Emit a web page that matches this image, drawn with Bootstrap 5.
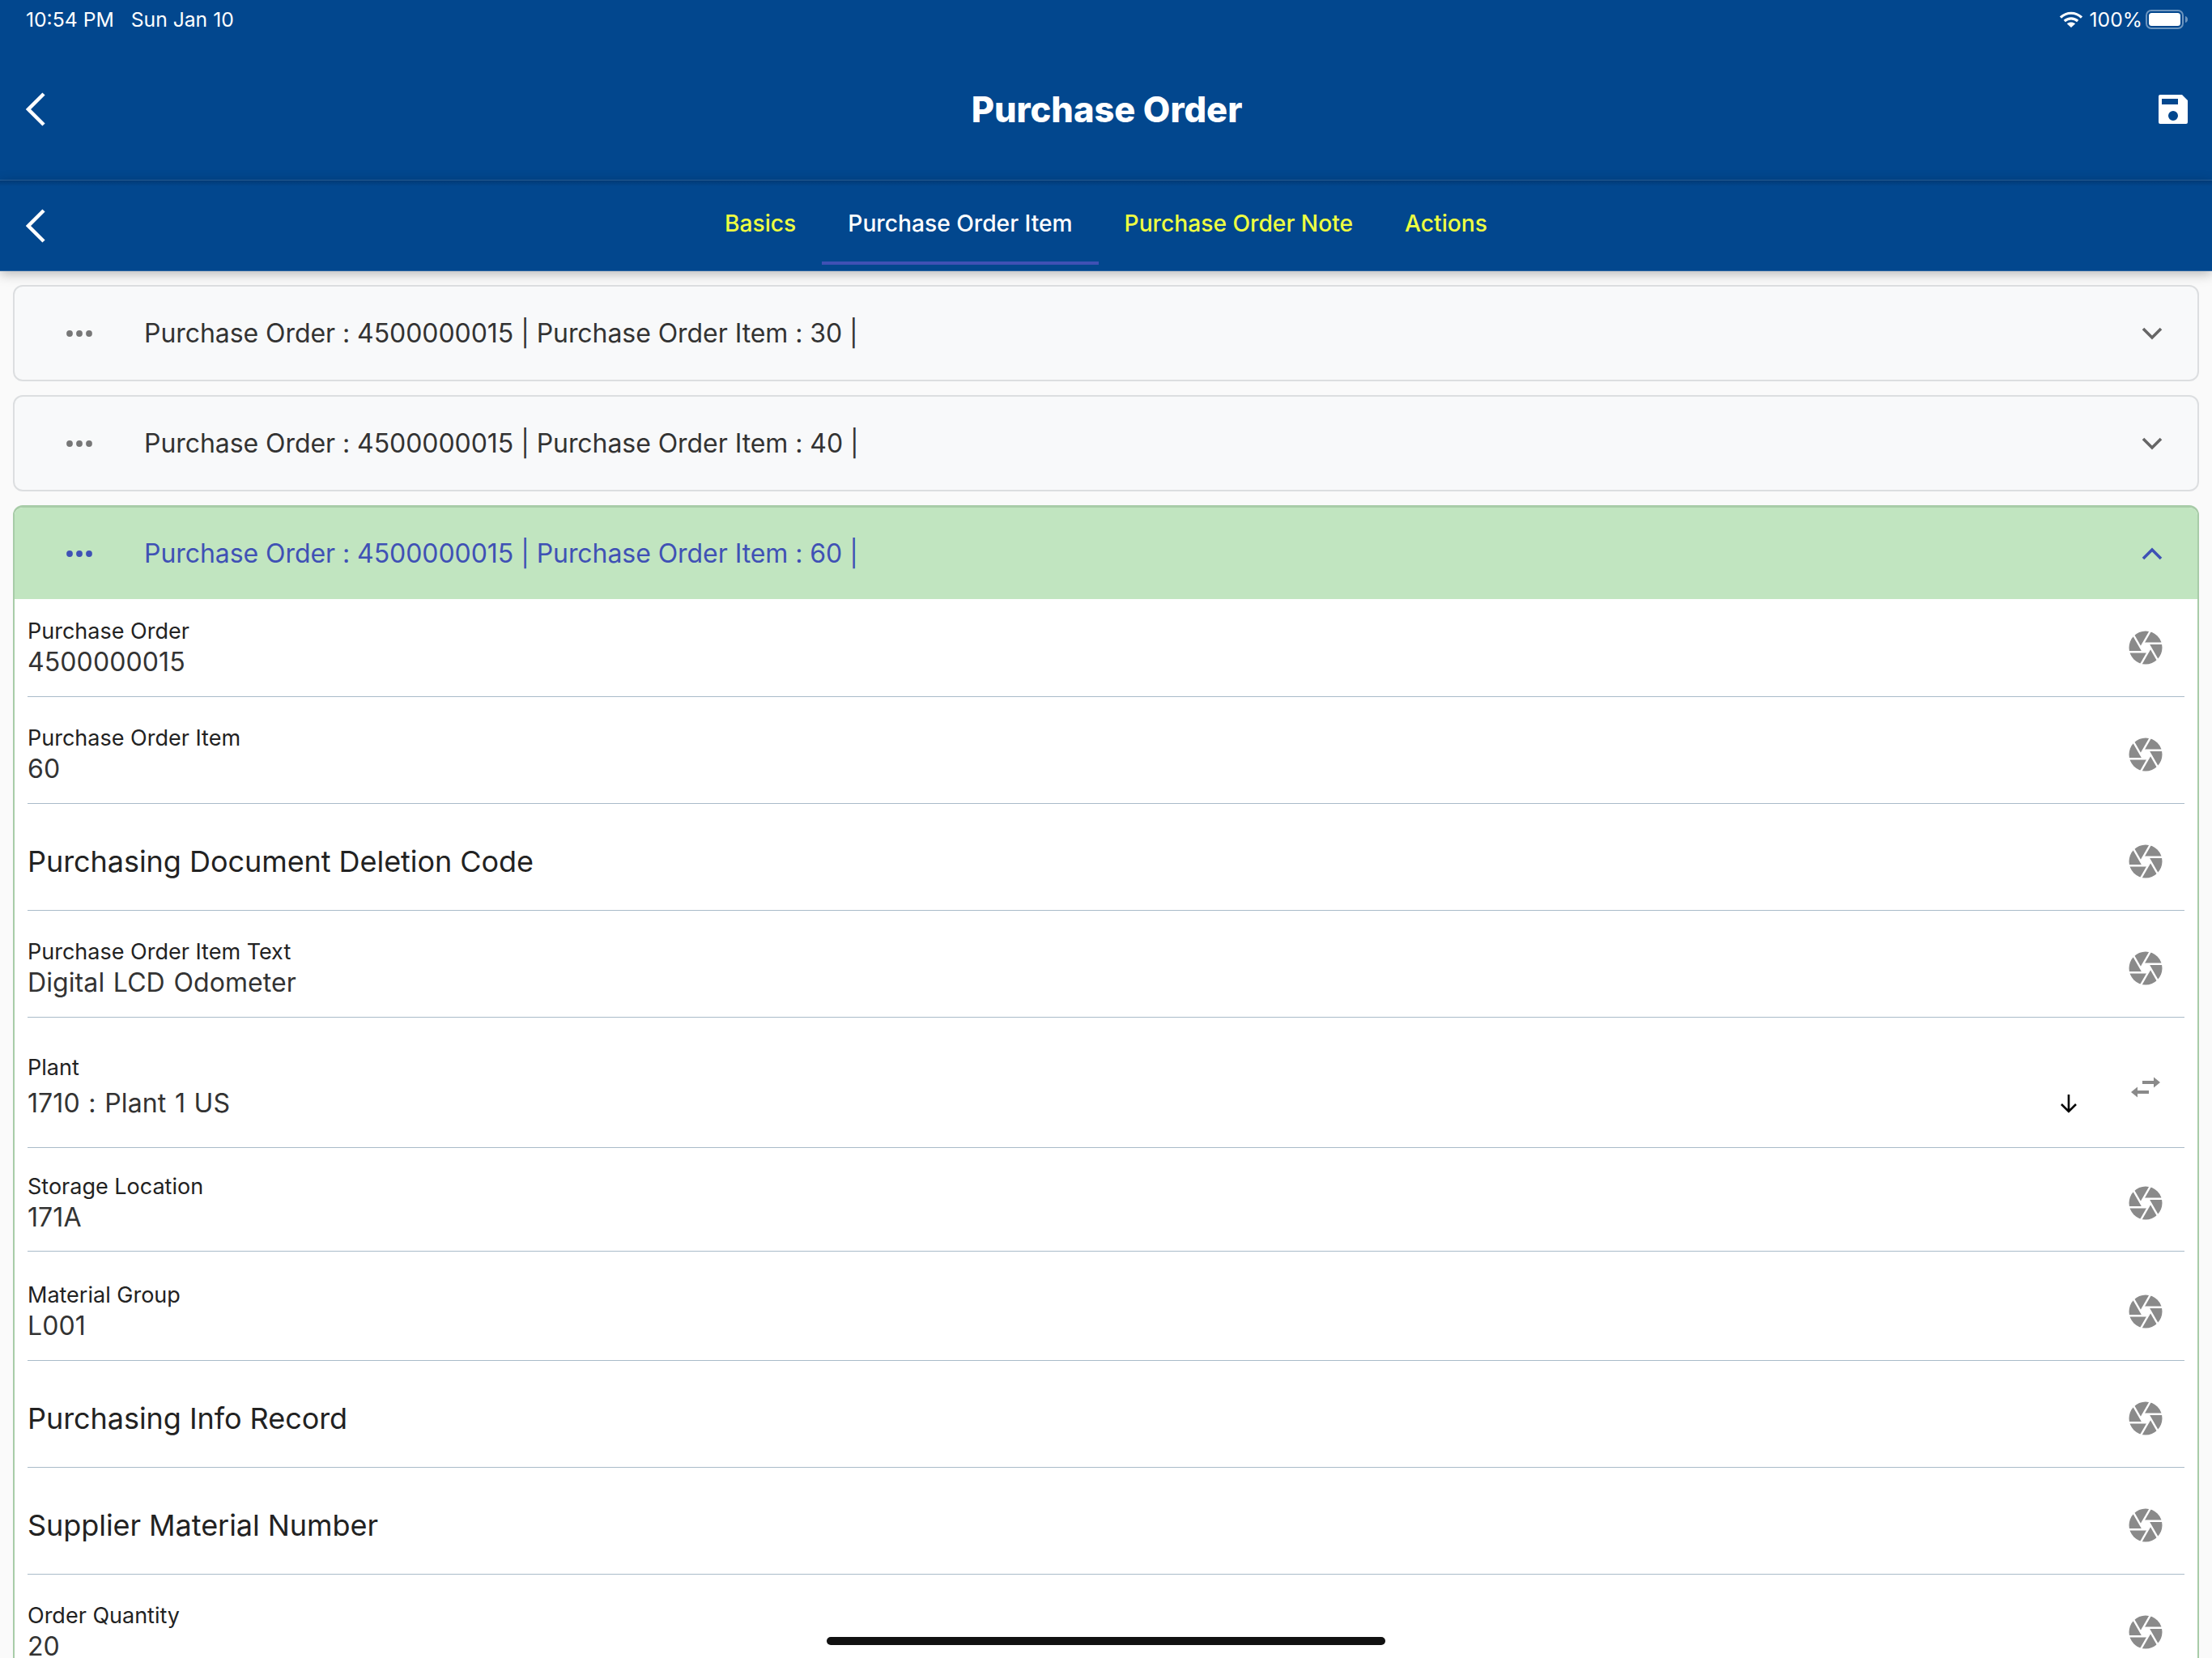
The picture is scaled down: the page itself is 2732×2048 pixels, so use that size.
<!DOCTYPE html>
<html lang="en">
<head>
<meta charset="utf-8">
<title>Purchase Order</title>
<link href="https://cdn.jsdelivr.net/npm/bootstrap@5.3.0/dist/css/bootstrap.min.css" rel="stylesheet">
<style>
html,body{height:100%;}
body{overflow:hidden;background:#fafafa;font-family:"Inter","Liberation Sans",sans-serif;color:#333;}
.ui-head{background:#02478e;color:#fff;height:223px;border-bottom:1px solid #2a639f;}
.ui-status{height:46px;padding:2px 30px 0 32px;font-size:24.7px;line-height:44px;}
.ui-status span+span{margin-left:21px;}
.ui-right{gap:9px;}
.ui-batt{margin-left:-5px;}
.ui-title-row{display:grid;grid-template-columns:1fr auto 1fr;align-items:center;height:176px;padding:2px 30px 0 32px;}
.ui-title{font-weight:800;font-size:43.400px;margin:2px 0 0;line-height:1;}
.ui-tabs{display:grid;grid-template-columns:1fr auto 1fr;align-items:center;height:112px;background:linear-gradient(#013a76 0,#02478e 7px);box-shadow:0 3px 14px rgba(0,0,0,.28);border-bottom:1px solid #2a639f;position:relative;z-index:2;}
.ui-tabs .ui-back{margin-left:32px;}
.ui-tabs .nav-link{font-weight:500;font-size:28.200px;line-height:1;color:#eeff41;padding:6px 32px 0;height:104px;display:flex;align-items:center;margin-top:-7px;border-bottom:4px solid transparent;}
.ui-tabs .nav-link.active{color:#fff;border-bottom-color:#3f51b5;}
.ui-main{padding:17px 16px 0;}
.ui-card{border:2px solid #dcdee0;border-radius:12px;background:#f8f9fa;margin-bottom:17px;overflow:hidden;}
.ui-card-head{height:115px;display:flex;align-items:center;padding:0 43px 0 64px;font-size:32px;color:#333;background:transparent;border:0;}
.ui-dots{width:32px;margin-right:64px;flex:none;}
.ui-card-text{flex:1;letter-spacing:-.06px;}
.ui-open{border-color:#a8cca8;border-top-width:3px;background:#fff;}
.ui-open .ui-card-head{height:113px;background:#c1e5c0;color:#3f51b5;}
.ui-list{border-radius:0;padding:0 16px;}
.ui-item{background:transparent;border:0;border-bottom:1px solid #a9bbc9;border-radius:0!important;padding:0;display:flex;align-items:center;margin-top:11px;height:121px;color:#333;}
.ui-item:first-child{margin-top:0;}
.ui-item.ui-tall{height:150px;}
.ui-item.ui-short{height:120px;margin-top:8px;}
.ui-item.ui-mid{height:122px;margin-top:13px;}
.ui-body{flex:1;min-width:0;}
.ui-text{margin-top:-2px;}
.ui-label{font-size:27px;line-height:38px;color:#222;}
.ui-value{font-size:32px;line-height:38px;color:#333;letter-spacing:.1px;word-spacing:1.5px;}
.ui-big{font-size:36px;line-height:44px;color:#222;letter-spacing:-.05px;}
.ui-tall .ui-text{margin-top:-4px;}
.ui-tall .ui-label{margin-bottom:6px;}
.ui-tall .ui-value{padding-right:36px;}
.ui-side{width:96px;flex:none;display:flex;justify-content:center;}
.ui-home{position:absolute;left:1021px;top:2022px;width:690px;height:10px;border-radius:5px;background:#111;z-index:5;}
svg{display:block;flex:none;}
</style>
</head>
<body>
<svg width="0" height="0" class="position-absolute">
  <defs>
    <symbol id="ui-aperture" viewBox="-21 -21 42 42">
      <circle r="20.5" fill="#8a8a8a"/>
      <g stroke="#fff" stroke-width="2.4" fill="none">
        <path d="M-17.5-19.8-3 5.3"/>
        <path d="M-17.5-19.8-3 5.3" transform="rotate(60)"/>
        <path d="M-17.5-19.8-3 5.3" transform="rotate(120)"/>
        <path d="M-17.5-19.8-3 5.3" transform="rotate(180)"/>
        <path d="M-17.5-19.8-3 5.3" transform="rotate(240)"/>
        <path d="M-17.5-19.8-3 5.3" transform="rotate(300)"/>
      </g>
      <path fill="#fff" d="M6 0 3 5.2H-3L-6 0-3-5.2H3Z"/>
    </symbol>
    <symbol id="ui-dots3" viewBox="0 0 32 8">
      <circle cx="4" cy="4" r="3.9" fill="currentColor"/><circle cx="16" cy="4" r="3.9" fill="currentColor"/><circle cx="28" cy="4" r="3.9" fill="currentColor"/>
    </symbol>
  </defs>
</svg>

<header class="ui-head">
  <div class="ui-status d-flex justify-content-between align-items-center">
    <div><span>10:54 PM</span><span>Sun Jan 10</span></div>
    <div class="ui-right d-flex align-items-center">
      <svg width="28" height="20" viewBox="0 0 28 20" fill="none" stroke="#fff" stroke-width="3.2"><path d="M1 7.5C8.5.5 19.5.5 27 7.5"/><path d="M5.8 12C10.5 7.8 17.5 7.8 22.200 12"/><path fill="#fff" stroke="none" d="M14 20 8.800 15.200C11.800 12.800 16.200 12.800 19.200 15.200Z"/></svg>
      <span>100%</span>
      <svg class="ui-batt" width="52" height="24" viewBox="0 0 52 24"><rect x="1" y="1" width="45" height="22" rx="6" fill="none" stroke="#6d95bf" stroke-width="2"/><rect x="4" y="4" width="39" height="16" rx="3.5" fill="#fff"/><path d="M49 8c2 .6 3 2 3 4s-1 3.400-3 4z" fill="#6d95bf"/></svg>
    </div>
  </div>
  <div class="ui-title-row">
    <a href="#" aria-label="Back"><svg width="24" height="42" viewBox="0 0 24 42" fill="none" stroke="#fff" stroke-width="4.500"><path d="M22 2 3 21l19 19"/></svg></a>
    <h1 class="ui-title">Purchase Order</h1>
    <a href="#" class="ms-auto" aria-label="Save"><svg width="36" height="36" viewBox="0 0 36 36"><path fill="#fff" fill-rule="evenodd" d="M2 0H29L36 7V34a2 2 0 0 1-2 2H2a2 2 0 0 1-2-2V2A2 2 0 0 1 2 0ZM4 5V12H24V5ZM18 20a6 6 0 1 0 0 12 6 6 0 0 0 0-12Z"/></svg></a>
  </div>
</header>

<nav class="ui-tabs">
  <a href="#" class="ui-back" aria-label="Back"><svg width="24" height="42" viewBox="0 0 24 42" fill="none" stroke="#fff" stroke-width="4.500"><path d="M22 2 3 21l19 19"/></svg></a>
  <ul class="nav flex-nowrap">
    <li class="nav-item"><a class="nav-link" href="#">Basics</a></li>
    <li class="nav-item"><a class="nav-link active" href="#">Purchase Order Item</a></li>
    <li class="nav-item"><a class="nav-link" href="#">Purchase Order Note</a></li>
    <li class="nav-item"><a class="nav-link" href="#">Actions</a></li>
  </ul>
  <div></div>
</nav>

<main class="ui-main">
  <section class="card ui-card">
    <div class="card-header ui-card-head">
      <svg class="ui-dots" height="8" viewBox="0 0 32 8" color="#777"><use href="#ui-dots3"/></svg>
      <div class="ui-card-text">Purchase Order : 4500000015 | Purchase Order Item : 30 |</div>
      <svg width="26" height="16" viewBox="0 0 26 16" fill="none" stroke="#666" stroke-width="3.600"><path d="M2 2l11 11L24 2"/></svg>
    </div>
  </section>
  <section class="card ui-card">
    <div class="card-header ui-card-head">
      <svg class="ui-dots" height="8" viewBox="0 0 32 8" color="#777"><use href="#ui-dots3"/></svg>
      <div class="ui-card-text">Purchase Order : 4500000015 | Purchase Order Item : 40 |</div>
      <svg width="26" height="16" viewBox="0 0 26 16" fill="none" stroke="#666" stroke-width="3.600"><path d="M2 2l11 11L24 2"/></svg>
    </div>
  </section>
  <section class="card ui-card ui-open">
    <div class="card-header ui-card-head">
      <svg class="ui-dots" height="8" viewBox="0 0 32 8" color="#3f51b5"><use href="#ui-dots3"/></svg>
      <div class="ui-card-text">Purchase Order : 4500000015 | Purchase Order Item : 60 |</div>
      <svg width="26" height="16" viewBox="0 0 26 16" fill="none" stroke="#3f51b5" stroke-width="3.600"><path d="M2 14 13 3l11 11"/></svg>
    </div>
    <div class="list-group ui-list">
      <div class="list-group-item ui-item"><div class="ui-body ui-text"><div class="ui-label">Purchase Order</div><div class="ui-value">4500000015</div></div><div class="ui-side"><svg width="42" height="42"><use href="#ui-aperture"/></svg></div></div>
      <div class="list-group-item ui-item"><div class="ui-body ui-text"><div class="ui-label">Purchase Order Item</div><div class="ui-value">60</div></div><div class="ui-side"><svg width="42" height="42"><use href="#ui-aperture"/></svg></div></div>
      <div class="list-group-item ui-item"><div class="ui-body ui-big">Purchasing Document Deletion Code</div><div class="ui-side"><svg width="42" height="42"><use href="#ui-aperture"/></svg></div></div>
      <div class="list-group-item ui-item"><div class="ui-body ui-text"><div class="ui-label">Purchase Order Item Text</div><div class="ui-value">Digital LCD Odometer</div></div><div class="ui-side"><svg width="42" height="42"><use href="#ui-aperture"/></svg></div></div>
      <div class="list-group-item ui-item ui-tall"><div class="ui-body ui-text"><div class="ui-label">Plant</div><div class="ui-value d-flex justify-content-between align-items-center"><span>1710 : Plant 1 US</span><svg width="22" height="24" viewBox="0 0 22 24" fill="none" stroke="#000" stroke-width="2.6"><path d="M11 1V22M2 13l9 9 9-9"/></svg></div></div><div class="ui-side"><svg width="38" height="28" viewBox="0 0 38 28" fill="#8a8a8a"><path d="M15 6h14V1.500L37 8l-8 6.500V10H15Z"/><path d="M23 22H9v4.500L1 20l8-6.500V18h14Z"/></svg></div></div>
      <div class="list-group-item ui-item ui-short"><div class="ui-body ui-text"><div class="ui-label">Storage Location</div><div class="ui-value">171A</div></div><div class="ui-side"><svg width="42" height="42"><use href="#ui-aperture"/></svg></div></div>
      <div class="list-group-item ui-item ui-mid"><div class="ui-body ui-text"><div class="ui-label">Material Group</div><div class="ui-value">L001</div></div><div class="ui-side"><svg width="42" height="42"><use href="#ui-aperture"/></svg></div></div>
      <div class="list-group-item ui-item"><div class="ui-body ui-big">Purchasing Info Record</div><div class="ui-side"><svg width="42" height="42"><use href="#ui-aperture"/></svg></div></div>
      <div class="list-group-item ui-item"><div class="ui-body ui-big">Supplier Material Number</div><div class="ui-side"><svg width="42" height="42"><use href="#ui-aperture"/></svg></div></div>
      <div class="list-group-item ui-item"><div class="ui-body ui-text"><div class="ui-label">Order Quantity</div><div class="ui-value">20</div></div><div class="ui-side"><svg width="42" height="42"><use href="#ui-aperture"/></svg></div></div>
    </div>
  </section>
</main>
<div class="ui-home"></div>
<script src="https://cdn.jsdelivr.net/npm/bootstrap@5.3.0/dist/js/bootstrap.bundle.min.js"></script>
</body>
</html>
